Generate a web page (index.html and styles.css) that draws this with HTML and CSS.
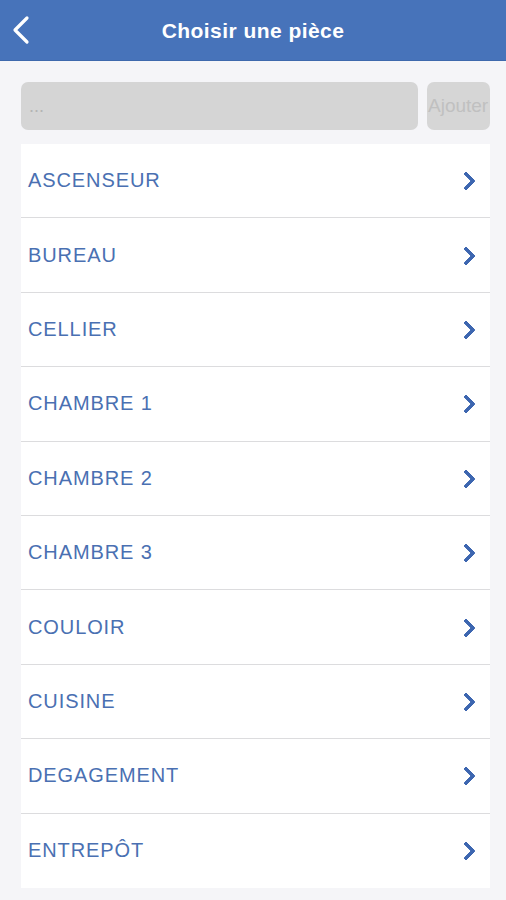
FILE: index.html
```html
<!DOCTYPE html>
<html lang="fr">
<head>
  <meta charset="UTF-8">
  <meta name="viewport" content="width=device-width, initial-scale=1.0">
  <title>Choisir une pièce</title>
  <link rel="stylesheet" href="styles.css">
</head>
<body>

<div class="header">
  <svg class="back" width="18" height="30" viewBox="0 0 18 30">
    <path d="M15 3 L3 15 L15 27" fill="none" stroke="#fff" stroke-width="3.2" stroke-linecap="round" stroke-linejoin="round"/>
  </svg>
  <h1>Choisir une pièce</h1>
</div>

<div class="content">
  <form class="add-form">
    <input type="text" class="room-input" placeholder="...">
    <button type="button" class="add-button">Ajouter</button>
  </form>

  <ul class="room-list">
    <li class="room">ASCENSEUR<span class="chev"></span></li>
    <li class="room">BUREAU<span class="chev"></span></li>
    <li class="room">CELLIER<span class="chev"></span></li>
    <li class="room">CHAMBRE 1<span class="chev"></span></li>
    <li class="room">CHAMBRE 2<span class="chev"></span></li>
    <li class="room">CHAMBRE 3<span class="chev"></span></li>
    <li class="room">COULOIR<span class="chev"></span></li>
    <li class="room">CUISINE<span class="chev"></span></li>
    <li class="room">DEGAGEMENT<span class="chev"></span></li>
    <li class="room">ENTREPÔT<span class="chev"></span></li>
  </ul>
</div>

</body>
</html>
```

FILE: styles.css
```css
body {
    font-family: 'Liberation Sans', Arial, sans-serif;
    margin: 0;
    padding: 0;
    background-color: #f5f5f8;
}

.header {
    height: 60px;
    background-color: #4773ba;
    border-bottom: 1px solid #3e69ad;
    display: flex;
    align-items: center;
    justify-content: center;
    position: relative;
}

.back {
    position: absolute;
    left: 12px;
    top: 15px;
}

h1 {
    margin: 0;
    color: #ffffff;
    font-size: 21px;
    font-weight: bold;
    letter-spacing: 0.45px;
    padding-top: 1px;
}

.content {
    padding: 21px 16px 0 21px;
}

.add-form {
    display: flex;
    gap: 9px;
    margin-bottom: 14px;
}

.room-input {
    flex: 1;
    height: 48px;
    box-sizing: border-box;
    border: none;
    border-radius: 7px;
    background-color: #d5d5d5;
    padding: 0 8px;
    font-family: inherit;
    font-size: 18px;
    color: #555;
}

.room-input::placeholder {
    color: #b4b4b4;
}

.add-button {
    width: 63px;
    height: 48px;
    border: none;
    border-radius: 7px;
    background-color: #d6d6d6;
    color: #c0c0c0;
    font-family: inherit;
    font-size: 19px;
    padding: 0 0 0 1px;
    overflow: hidden;
    white-space: nowrap;
    text-align: left;
}

.room-list {
    list-style: none;
    margin: 0;
    padding: 0;
    width: 469px;
    background-color: #ffffff;
}

.room {
    height: 74.4px;
    box-sizing: border-box;
    border-bottom: 1.5px solid #dcdcde;
    display: flex;
    align-items: center;
    justify-content: space-between;
    padding: 0 17px 0 7px;
    color: #4a70b2;
    font-size: 20px;
    letter-spacing: 0.9px;
}

.room:last-child {
    border-bottom: none;
}

.chev {
    width: 10px;
    height: 10px;
    border-top: 4px solid #3d66b0;
    border-right: 4px solid #3d66b0;
    border-radius: 2px;
    transform: rotate(45deg);
    margin-top: 1px;
}
```
